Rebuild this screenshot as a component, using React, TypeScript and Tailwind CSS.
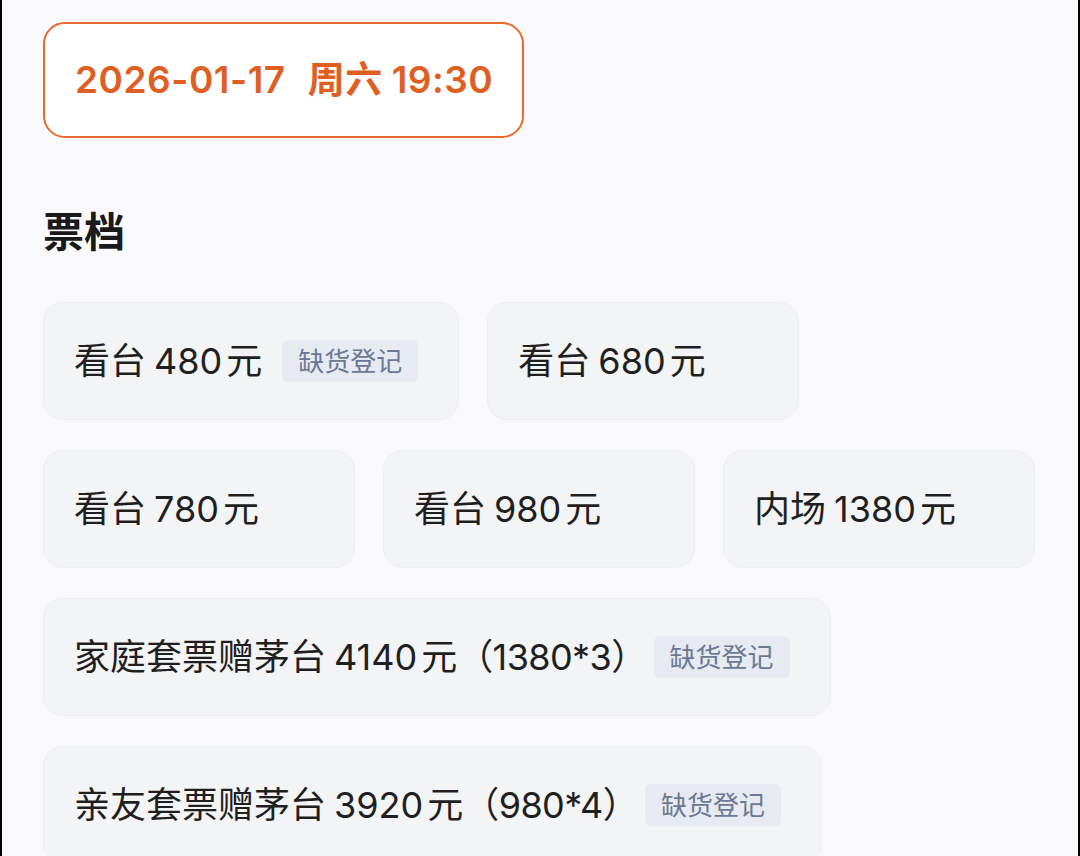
import React from 'react';

interface Tier {
  label: string;
  price: string;
  extra?: string;
  soldOut?: boolean;
}

const tiers: Tier[] = [
  { label: '看台', price: '480', soldOut: true },
  { label: '看台', price: '680' },
  { label: '看台', price: '780' },
  { label: '看台', price: '980' },
  { label: '内场', price: '1380' },
  { label: '家庭套票赠茅台', price: '4140', extra: '1380*3', soldOut: true },
  { label: '亲友套票赠茅台', price: '3920', extra: '980*4', soldOut: true },
];

function TierCard({ tier }: { tier: Tier }) {
  return (
    <button className="flex h-[118px] min-w-[312px] items-center rounded-[20px] border border-[#eceef1] bg-[#f3f4f6] pl-[30px] pr-10 text-[36px] text-[#1f1f1f]">
      <span className="whitespace-nowrap">
        {tier.label}
        <span className="ml-[8px] mr-[4px]">{tier.price}</span>元
        {tier.extra && <span className="tracking-[-0.6px]">（{tier.extra}）</span>}
      </span>
      {tier.soldOut && (
        <span
          className={
            tier.extra
              ? 'ml-[7px] flex h-[42px] items-center rounded-md bg-[#e7ebf1] px-4 text-[26px] text-[#6b7894]'
              : 'ml-5 flex h-[42px] items-center rounded-md bg-[#e7ebf1] px-4 text-[26px] text-[#6b7894]'
          }
        >
          缺货登记
        </span>
      )}
    </button>
  );
}

export default function App() {
  return (
    <div className="min-h-screen border-x-2 border-black bg-[#f9f9fb] pl-[41px] pr-[40px] pt-[22px] font-['Inter','Noto_Sans_CJK_SC',sans-serif]">
      <div className="flex h-[116px] w-[481px] items-center rounded-[22px] border-2 border-[#e7692c] bg-white pl-[30px] text-[37px] font-semibold tracking-[0.5px] text-[#df5f22]">
        <span>2026-01-17</span>
        <span className="ml-[22px]">周六</span>
        <span className="ml-[9px]">19:30</span>
      </div>

      <h2 className="mt-[74px] text-[41px] font-semibold leading-none text-[#1a1a1a]">票档</h2>

      <div className="mt-[49px] flex flex-wrap gap-x-[28px] gap-y-[30px]">
        {tiers.map((tier, i) => (
          <TierCard key={i} tier={tier} />
        ))}
      </div>
    </div>
  );
}
